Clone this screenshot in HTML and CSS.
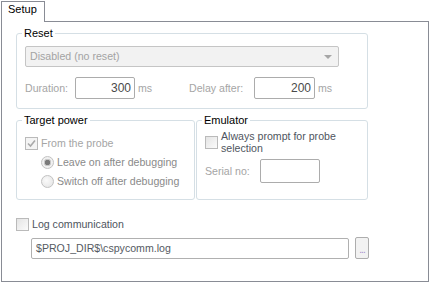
FILE: index.html
```html
<!DOCTYPE html>
<html lang="en">

<head>
    <meta charset="UTF-8">
    <title>Setup</title>
    <link rel="stylesheet" href="styles.css">
</head>

<body>
    <div class="tabs">
        <div class="tab">Setup</div>
    </div>
    <div class="panel">
        <fieldset class="group reset">
            <legend>Reset</legend>
            <div class="select">
                <span>Disabled (no reset)</span>
                <span class="arrow"></span>
            </div>
            <div class="timing">
                <span class="label dur">Duration:</span>
                <div class="field num">300</div>
                <span class="label unit">ms</span>
                <span class="label delay">Delay after:</span>
                <div class="field num wide">200</div>
                <span class="label unit">ms</span>
            </div>
        </fieldset>

        <div class="pair">
            <fieldset class="group power">
                <legend>Target power</legend>
                <div class="opt first">
                    <span class="check checked">
                        <svg width="9" height="9" viewBox="0 0 9 9"><path d="M1 4.5 L3.5 7 L8 1.5" fill="none" stroke="#a9a9a9" stroke-width="1.6"/></svg>
                    </span>
                    <span class="opt-text light">From the probe</span>
                </div>
                <div class="opt sub">
                    <span class="radio on"></span>
                    <span class="opt-text">Leave on after debugging</span>
                </div>
                <div class="opt sub">
                    <span class="radio"></span>
                    <span class="opt-text">Switch off after debugging</span>
                </div>
            </fieldset>
            <fieldset class="group emu">
                <legend>Emulator</legend>
                <div class="opt multi">
                    <span class="check"></span>
                    <span class="opt-text dark wrap">Always prompt for probe selection</span>
                </div>
                <div class="serial">
                    <span class="label serial-label">Serial no:</span>
                    <div class="field tall"></div>
                </div>
            </fieldset>
        </div>

        <div class="opt log">
            <span class="check"></span>
            <span class="opt-text dark">Log communication</span>
        </div>
        <div class="path-row">
            <div class="field path">$PROJ_DIR$\cspycomm.log</div>
            <div class="browse">...</div>
        </div>
    </div>
</body>

</html>
```

FILE: styles.css
```css
body {
    margin: 0;
    background: #ffffff;
    font-family: 'Liberation Sans', Arial, sans-serif;
    font-size: 10.6px;
    line-height: 13px;
    color: #000000;
}
.tabs {
    display: flex;
    padding: 1px 0 0 1px;
}
.tab {
    position: relative;
    width: 44px;
    height: 21px;
    box-sizing: border-box;
    padding: 1px 0 0 6px;
    margin-bottom: -1px;
    border: 1px solid #898c95;
    border-bottom: none;
    background: #ffffff;
    font-size: 11px;
}
.panel {
    width: 428px;
    height: 261px;
    margin-left: 1px;
    box-sizing: border-box;
    border: 1px solid #898c95;
    padding: 5px 0 0 14px;
}

/* group boxes */
.group {
    margin: 0;
    padding: 0 0 0 8px;
    min-inline-size: 0;
    box-sizing: border-box;
    border: 1px solid #d5dfe5;
    border-radius: 3px;
}
.group legend {
    margin-left: -3px;
    padding: 0 2px;
    line-height: 13px;
    font-size: 11px;
}
.reset {
    width: 352px;
    height: 82px;
    padding-left: 8px;
}
.select {
    display: flex;
    justify-content: space-between;
    align-items: center;
    width: 314px;
    height: 21px;
    margin-top: 6px;
    box-sizing: border-box;
    padding: 0 6px 0 4px;
    border: 1px solid #c5c5c5;
    border-radius: 2px;
    background: #f2f2f2;
    color: #a3a3a3;
}
.arrow {
    width: 0;
    height: 0;
    border-left: 4px solid transparent;
    border-right: 4px solid transparent;
    border-top: 4px solid #a6a6a6;
    margin-top: 1px;
}
.timing {
    display: flex;
    align-items: center;
    margin-top: 10px;
}
.label {
    color: #a5a5a5;
}
.dur {
    width: 50px;
}
.unit {
    width: 15px;
    margin-left: 3px;
}
.delay {
    width: 65px;
    margin-left: 36px;
}
.field {
    box-sizing: border-box;
    height: 22px;
    width: 60px;
    border: 1px solid #acacac;
    border-radius: 2px;
    background: #ffffff;
}
.num {
    display: flex;
    align-items: center;
    justify-content: flex-end;
    padding-right: 3px;
    font-size: 12px;
    color: #4a4a4a;
}
.wide {
    width: 61px;
}

/* power + emulator */
.pair {
    display: flex;
    gap: 1px;
    margin-top: 5px;
}
.power {
    width: 179px;
    height: 86px;
}
.emu {
    width: 172px;
    height: 86px;
}
.opt {
    display: flex;
    align-items: center;
    gap: 3px;
    height: 19px;
}
.opt.first {
    margin-top: 6px;
    height: 20px;
}
.opt.sub {
    margin-left: 16px;
}
.opt-text {
    color: #8a8a8a;
}
.opt-text.light {
    color: #a5a5a5;
}
.opt-text.dark {
    color: #4f5560;
}
.wrap {
    width: 125px;
    line-height: 12px;
}
.opt.multi {
    height: 24px;
    margin-top: 3px;
}
.check {
    display: flex;
    align-items: center;
    justify-content: center;
    flex: none;
    width: 13px;
    height: 13px;
    box-sizing: border-box;
    border: 1px solid #bababa;
    background: linear-gradient(135deg, #e4e4e4, #fbfbfb);
}
.check.checked {
    background: #f4f4f4;
}
.radio {
    flex: none;
    width: 13px;
    height: 13px;
    box-sizing: border-box;
    border: 1px solid #c2c2c2;
    border-radius: 50%;
    background: radial-gradient(circle at 40% 40%, #fafafa, #e2e2e2);
}
.radio.on {
    background: radial-gradient(circle, #7a7a7a 0 2.5px, #c8c8c8 3px 3.5px, #f0f0f0 4px);
}
.serial {
    display: flex;
    align-items: center;
    margin-top: 5px;
}
.serial-label {
    width: 55px;
}
.tall {
    height: 24px;
}

/* log communication */
.opt.log {
    margin-top: 15px;
    height: 19px;
}
.path-row {
    display: flex;
    align-items: center;
    margin: 3px 0 0 15px;
}
.path {
    display: flex;
    align-items: center;
    width: 318px;
    height: 21px;
    padding-left: 4px;
    border-color: #b0b0b0;
    color: #555a62;
}
.browse {
    box-sizing: border-box;
    width: 14px;
    height: 22px;
    margin-left: 6px;
    padding-top: 5px;
    border: 1px solid #adadad;
    border-radius: 2px;
    background: #f2f2f2;
    color: #a48ccc;
    font-size: 10px;
    text-align: center;
    letter-spacing: -1px;
}
```
